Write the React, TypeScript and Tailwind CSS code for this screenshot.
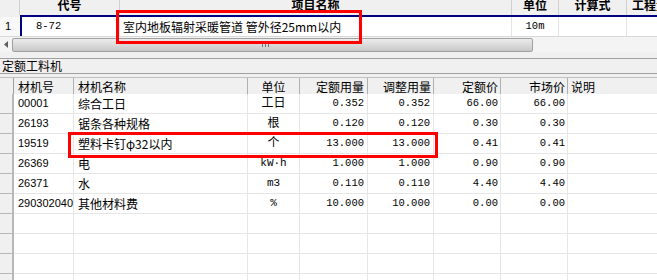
const cjk = "font-['Noto_Sans_CJK_SC',sans-serif]";
const mono = "font-['Liberation_Mono','Noto_Sans_CJK_SC',monospace]";

const rows = [
  ["00001", "综合工日", "工日", "0.352", "0.352", "66.00", "66.00"],
  ["26193", "锯条各种规格", "根", "0.120", "0.120", "0.30", "0.30"],
  ["19519", "塑料卡钉φ32以内", "个", "13.000", "13.000", "0.41", "0.41"],
  ["26369", "电", "kW·h", "1.000", "1.000", "0.90", "0.90"],
  ["26371", "水", "m3", "0.110", "0.110", "4.40", "4.40"],
  ["290302040", "其他材料费", "%", "10.000", "10.000", "0.00", "0.00"],
  ["", "", "", "", "", "", ""],
  ["", "", "", "", "", "", ""],
  ["", "", "", "", "", "", ""],
  ["", "", "", "", "", "", ""],
];

const grid = "grid grid-cols-[14px_60px_174px_52px_68px_66px_67px_67px_1fr]";

function App() {
  return (
    <div className={`relative w-[657px] h-[280px] overflow-hidden bg-[#f0f0f0] text-black ${cjk}`}>
      {/* top: 项目 grid */}
      <div className="flex h-[15px] items-end overflow-hidden text-[12px] leading-[12px] font-bold bg-[#f0f0f0]">
        <div className="w-[20px] shrink-0 h-full border-r border-[#d0d0d0]"></div>
        <div className="w-[100px] shrink-0 h-full flex items-end justify-center pb-[4px] border-r border-[#d0d0d0]">代号</div>
        <div className="w-[392px] shrink-0 h-full flex items-end justify-center pb-[4px] border-r border-[#d0d0d0]">项目名称</div>
        <div className="w-[47px] shrink-0 h-full flex items-end justify-center pb-[4px] border-r border-[#d0d0d0]">单位</div>
        <div className="w-[68px] shrink-0 h-full flex items-end justify-center pb-[4px] border-r border-[#d0d0d0]">计算式</div>
        <div className="flex-1 min-w-0 h-full flex items-end pl-[5px] pb-[4px] overflow-hidden whitespace-nowrap">工程量</div>
      </div>
      <div className="flex h-[2px]">
        <div className="w-[20px] bg-[#f0f0f0]"></div>
        <div className="flex-1 bg-[#000080]"></div>
      </div>
      <div className="flex h-[19px] bg-white text-[12px]">
        <div className="w-[20px] shrink-0 pl-[5px] flex items-center bg-[#f8f8f8] font-['Liberation_Sans',sans-serif] text-[11px]">1</div>
        <div className={`w-[100px] shrink-0 border-l-2 border-[#000080] border-r border-r-[#e4e4e4] pl-[14px] flex items-center text-[10.5px] ${mono}`}>8-72</div>
        <div className="w-[392px] shrink-0 border-r border-[#e4e4e4] pl-[3px] flex items-center">
          室内地板辐射采暖管道 管外径25mm以内
        </div>
        <div className={`w-[47px] shrink-0 border-r border-[#e4e4e4] flex items-center justify-center text-[10.5px] ${mono}`}>10m</div>
        <div className="w-[68px] shrink-0 border-r border-[#e4e4e4]"></div>
        <div className="flex-1"></div>
      </div>
      {/* horizontal scrollbar */}
      <div className="flex h-[16px] bg-[#f4f4f4] border-t border-[#d8d8d8] items-center">
        <div className="w-[12px] shrink-0 flex items-center justify-center">
          <svg width="5" height="7" viewBox="0 0 5 7">
            <path d="M4 0 L0 3.5 L4 7 Z" fill="#606060" />
          </svg>
        </div>
        <div className="w-[521px] shrink-0 h-[14px] rounded-[2px] border border-[#a0a0a0] bg-gradient-to-b from-[#ececec] to-[#c8c8c8] flex items-center justify-center pr-[14px]">
          <svg width="8" height="5" viewBox="0 0 8 5">
            <path d="M0.5 0 V5 M3.5 0 V5 M6.5 0 V5" stroke="#707070" strokeWidth="1" />
          </svg>
        </div>
        <div className="flex-1"></div>
      </div>
      <div className="h-[6px]"></div>
      <div className="h-[1px] bg-[#a0a0a0]"></div>
      {/* 定额工料机 */}
      <div className="h-[14px] pl-[2px] text-[12px] leading-[14px]">定额工料机</div>
      <div className="h-[1px] bg-[#a0a0a0]"></div>
      <div className="h-[3px]"></div>
      <div className={`${grid} h-[17px] text-[12px] border-t border-[#c0c0c0]`}>
        <div className="border-r border-b border-[#a0a0a0]"></div>
        <div className="border-r border-b border-[#b0b0b0] pl-[4px] flex items-center">材机号</div>
        <div className="border-r border-b border-[#b0b0b0] pl-[4px] flex items-center">材机名称</div>
        <div className="border-r border-b border-[#b0b0b0] flex items-center justify-center">单位</div>
        <div className="border-r border-b border-[#b0b0b0] pr-[3px] flex items-center justify-end">定额用量</div>
        <div className="border-r border-b border-[#b0b0b0] pr-[2px] flex items-center justify-end">调整用量</div>
        <div className="border-r border-b border-[#b0b0b0] pr-[2px] flex items-center justify-end">定额价</div>
        <div className="border-r border-b border-[#b0b0b0] pr-[2px] flex items-center justify-end">市场价</div>
        <div className="border-b border-[#b0b0b0] pl-[3px] flex items-center">说明</div>
      </div>
      {rows.map((r, i) => (
        <div key={i} className={`${grid} h-[20px] text-[12px]`}>
          <div className="bg-[#f0f0f0] border-r-2 border-b border-[#b8b8b8]"></div>
          <div className="bg-white border-r border-b border-[#e6e6e6] pl-[4px] flex items-center font-['Liberation_Sans',sans-serif] text-[11px]">{r[0]}</div>
          <div className="bg-white border-r border-b border-[#e6e6e6] pl-[4px] flex items-center">{r[1]}</div>
          <div className={`bg-white border-r border-b border-[#e6e6e6] flex items-center justify-center ${mono} ${/[a-z0-9%]/i.test(r[2]) ? "text-[11px]" : "text-[12px]"}`}>{r[2]}</div>
          <div className={`bg-white border-r border-b border-[#e6e6e6] pr-[3px] flex items-center justify-end text-[10.5px] ${mono}`}>{r[3]}</div>
          <div className={`bg-white border-r border-b border-[#e6e6e6] pr-[3px] flex items-center justify-end text-[10.5px] ${mono}`}>{r[4]}</div>
          <div className={`bg-white border-r border-b border-[#e6e6e6] pr-[2px] flex items-center justify-end text-[10.5px] ${mono}`}>{r[5]}</div>
          <div className={`bg-white border-r border-b border-[#e6e6e6] pr-[2px] flex items-center justify-end text-[10.5px] ${mono}`}>{r[6]}</div>
          <div className="bg-white border-b border-[#e6e6e6]"></div>
        </div>
      ))}

      {/* red annotation boxes */}
      <div className="absolute left-[116px] top-[10px] w-[246px] h-[34px] border-[3px] border-[#ff0000]"></div>
      <div className="absolute left-[68px] top-[132px] w-[370px] h-[26px] border-[3px] border-[#ff0000]"></div>
    </div>
  );
}

export default App;
